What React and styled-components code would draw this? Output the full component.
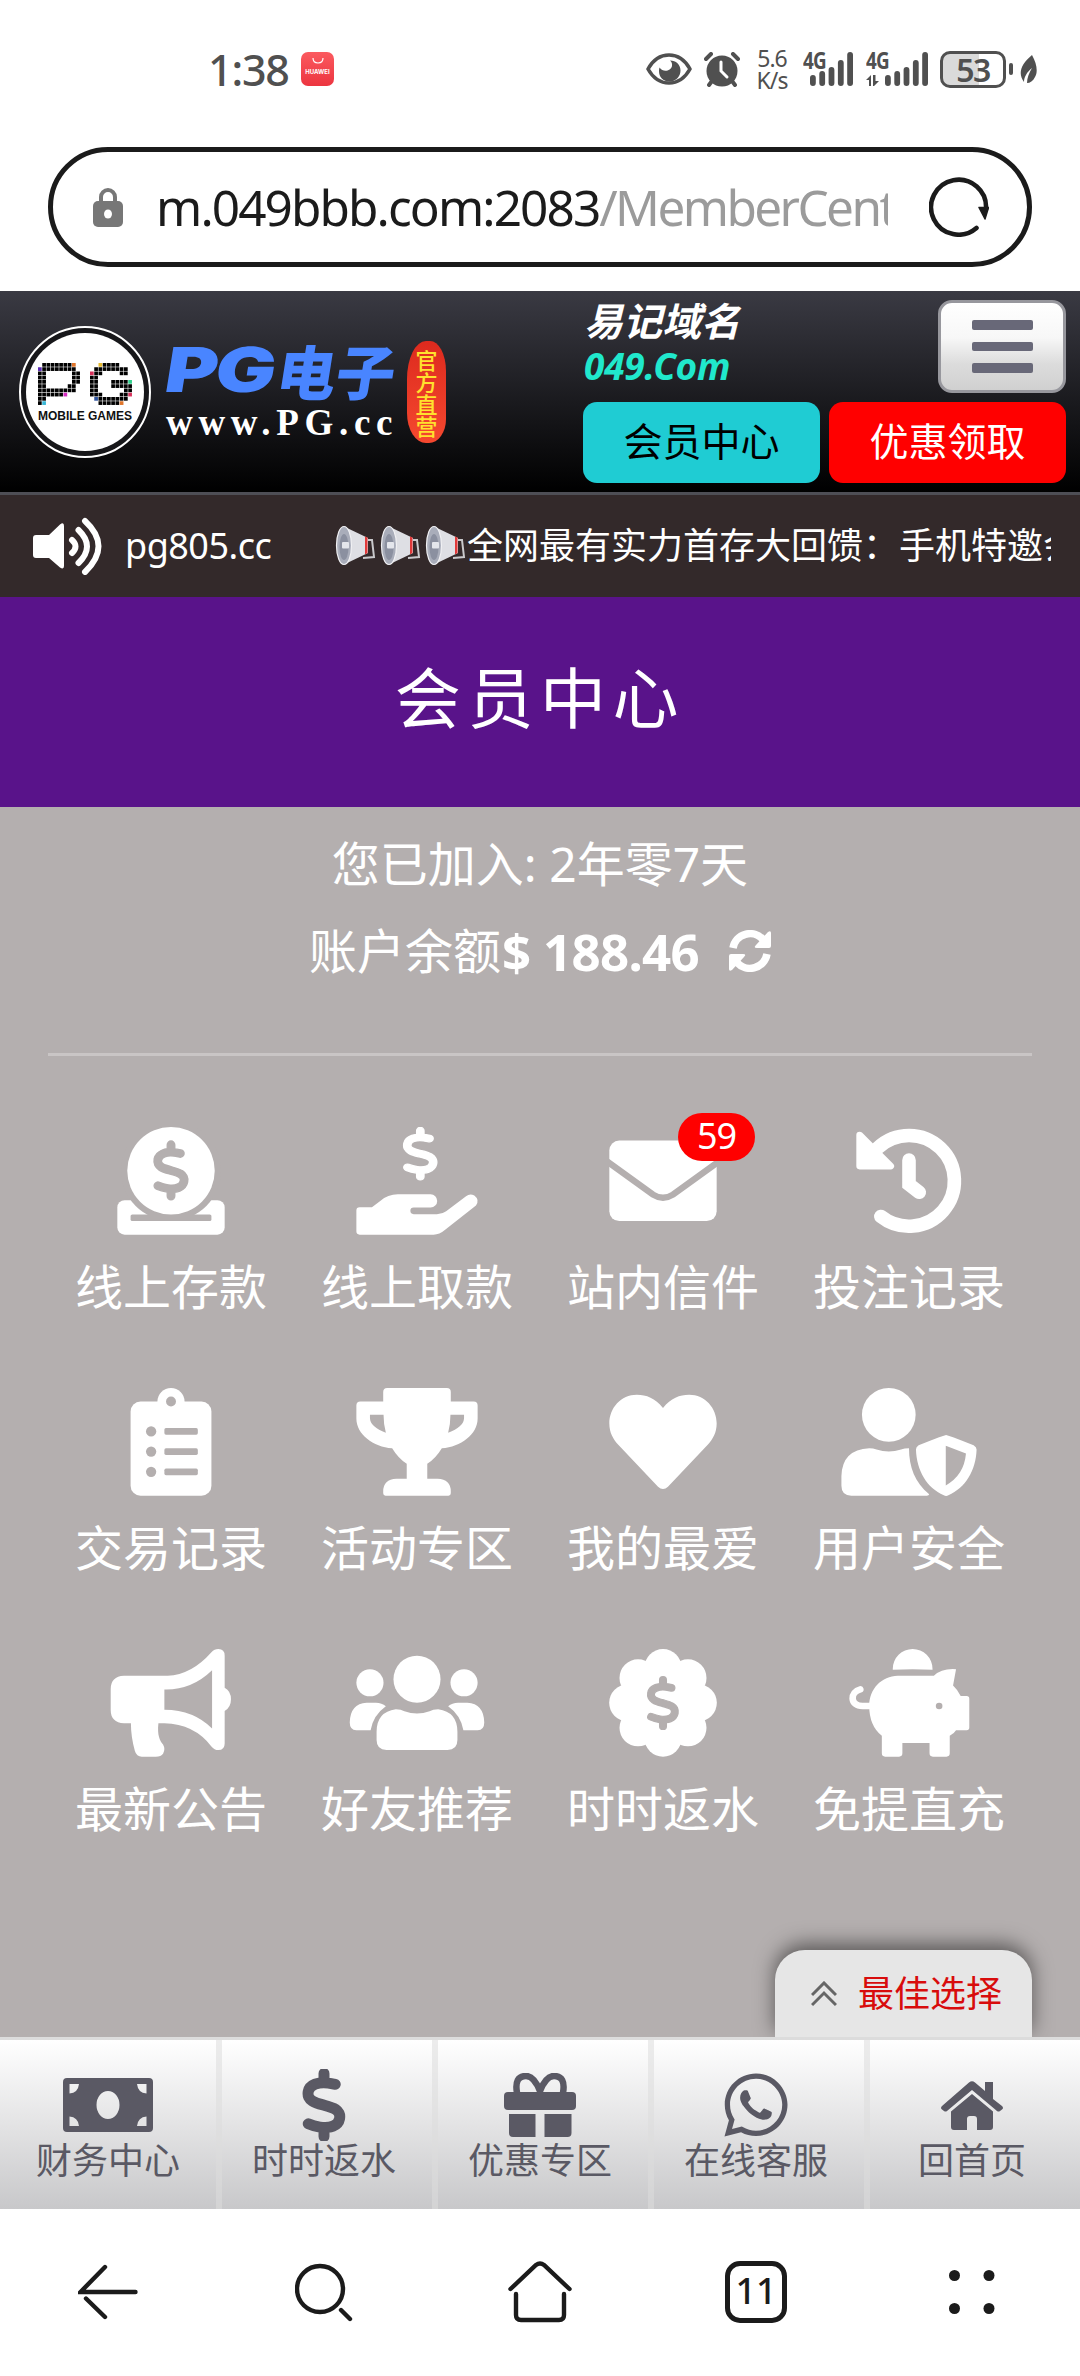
import styled, { createGlobalStyle } from "styled-components";
import { FaDollarSign, FaWhatsapp } from "react-icons/fa6";

const BG = "#b4afaf";
const INK = "#1b1b1b";
const STATUS = "#505050";
const NAV = "#5a5964";

const GlobalStyle = createGlobalStyle`
    * {
        box-sizing: border-box;
    }
    body {
        margin: 0;
        background: #fff;
        font-family: "Noto Sans", "Noto Sans CJK SC", sans-serif;
    }
    svg {
        display: block;
        flex: none;
    }
`;

const Page = styled.div`
    width: 1080px;
    height: 2376px;
    display: flex;
    flex-direction: column;
    overflow: hidden;
    white-space: nowrap;
`;

/* status bar */
const StatusBar = styled.div`
    height: 147px;
    padding: 42px 43px 0 208px;
    display: flex;
    align-items: flex-start;
    justify-content: space-between;
    color: ${STATUS};
`;

const StatusGroup = styled.div`
    height: 54px;
    display: flex;
    align-items: center;
`;

const Clock = styled.span`
    width: 93px;
    font-size: 43px;
    font-weight: 500;
    line-height: 54px;
    letter-spacing: -1.2px;
    padding-top: 2px;
`;

const AppBadge = styled.span`
    width: 33px;
    height: 34px;
    border-radius: 7px;
    background: linear-gradient(#fb5a5f, #ec3540);
    color: #fff;
    display: flex;
    flex-direction: column;
    align-items: center;
    padding-top: 6px;
    font: bold 6px/8px "Inter", sans-serif;
    gap: 4px;
`;

const NetSpeed = styled.span`
    width: 36px;
    margin: 0 13px 0 14px;
    text-align: center;
    font-size: 23px;
    line-height: 22px;
    letter-spacing: -1px;
    padding-bottom: 1px;
`;

const Signal = styled.div`
    width: ${props => props.$width}px;
    height: 36px;
    margin-right: ${props => props.$gap}px;
    position: relative;
`;

const SignalLabel = styled.span`
    position: absolute;
    left: 0;
    top: -2px;
    font: 700 23px/22px "Noto Sans", sans-serif;
    letter-spacing: -1px;
    transform: scaleX(0.82);
    transform-origin: 0 50%;
`;

const Battery = styled.div`
    width: 66px;
    height: 37px;
    border: 3px solid ${STATUS};
    border-radius: 10px;
    background: linear-gradient(90deg, #dadada 60%, #fff 60%);
    font: 600 32px/31px "Noto Sans", sans-serif;
    letter-spacing: -1.5px;
    text-align: center;
`;

const BatteryCap = styled.div`
    width: 4px;
    height: 12px;
    border-radius: 2px;
    margin: 0 7px 0 3px;
    background: ${STATUS};
`;

/* address bar */
const AddressBar = styled.div`
    width: 984px;
    height: 120px;
    margin: 0 48px 24px;
    padding: 0 38px 0 40px;
    border: 5px solid ${INK};
    border-radius: 60px;
    display: flex;
    align-items: center;
    flex: none;
`;

const Url = styled.div`
    width: 732px;
    margin: 0 41px 0 33px;
    overflow: hidden;
    color: ${INK};
    font-size: 49.5px;
    line-height: 66px;
    letter-spacing: -1.9px;
    padding-bottom: 1px;
`;

const UrlPath = styled.span`
    color: #9b9b9b;
    letter-spacing: -2.6px;
`;

/* site header */
const Header = styled.header`
    height: 204px;
    padding: 9px 15px 9px 19px;
    border-bottom: 3px solid #4e4e55;
    background: linear-gradient(#3a3a43, #000);
    display: flex;
    justify-content: space-between;
    flex: none;
`;

const Brand = styled.div`
    display: flex;
    padding-top: 26px;
`;

const LogoRing = styled.div`
    width: 132px;
    height: 132px;
    border: 2px solid #fff;
    border-radius: 50%;
    padding: 5px;
    background: #17171a;
`;

const LogoDisc = styled.div`
    width: 118px;
    height: 118px;
    border-radius: 50%;
    background: #fff;
    padding-top: 30px;
    display: flex;
    flex-direction: column;
    align-items: center;
`;

const LogoCaption = styled.span`
    margin-top: 4px;
    color: #111;
    font: bold 12px/12px "Liberation Sans", sans-serif;
`;

const BrandText = styled.div`
    width: 238px;
    margin-left: 15px;
    padding-top: 13px;
`;

const BrandName = styled.div`
    display: flex;
    align-items: center;
    height: 62px;
    color: #4985ff;
    transform: skewX(-9deg);
`;

const BrandLatin = styled.span`
    width: 112px;
    font: 900 62px/62px "Inter", sans-serif;
    transform: scaleX(1.29);
    transform-origin: 0 50%;
    letter-spacing: -2px;
`;

const BrandHan = styled.span`
    font: 900 59px/62px "Noto Sans CJK SC", sans-serif;
`;

const BrandSite = styled.div`
    color: #fff;
    font: bold 37px/44px "Liberation Serif", serif;
    letter-spacing: 5.7px;
`;

const Seal = styled.div`
    width: 39px;
    height: 102px;
    margin: 15px 0 0 3px;
    padding: 7px 8px;
    border-radius: 19px 16px 17px 19px / 38px 30px 24px 30px;
    background: linear-gradient(#dd2a1e, #f5482f);
    color: #ffe12e;
    font: 500 22px/22px "Noto Sans CJK SC", sans-serif;
    white-space: normal;
    text-align: center;
`;

const HeaderSide = styled.div`
    width: 483px;
    margin-right: -1px;
`;

const HeaderTop = styled.div`
    height: 93px;
    display: flex;
    justify-content: space-between;
    margin-bottom: 9px;
`;

const EasyDomain = styled.div`
    padding-left: 1px;
    font-style: italic;
    font-weight: 700;
    color: #fff;
    font-size: 39px;
    line-height: 42px;
`;

const DomainName = styled.div`
    color: #20e8cc;
    font-size: 37px;
    line-height: 48px;
    letter-spacing: -0.2px;
`;

const MenuButton = styled.button`
    width: 128px;
    height: 93px;
    padding: 0;
    border: 3px solid #97979d;
    border-radius: 14px;
    background: linear-gradient(#fff 0%, #f7f7f7 40%, #dcdcdc 70%, #d0d0d0 100%);
    display: flex;
    flex-direction: column;
    align-items: center;
    justify-content: center;
    gap: 12px;
`;

const MenuLine = styled.span`
    width: 61px;
    height: 9.5px;
    border-radius: 2px;
    background: #686878;
`;

const HeaderButtons = styled.div`
    display: flex;
    justify-content: space-between;
`;

const HeaderButton = styled.button`
    width: 237px;
    height: 81px;
    border: 0;
    padding: 0 0 4px;
    border-radius: 14px;
    background: ${props => props.$bg};
    color: ${props => props.$color};
    font: 400 39px/50px "Noto Sans", "Noto Sans CJK SC", sans-serif;
`;

/* news ticker */
const Ticker = styled.div`
    height: 102px;
    padding: 0 29px 0 33px;
    background: #33292a;
    color: #fff;
    font-size: 36px;
    line-height: 54px;
    display: flex;
    align-items: center;
    flex: none;
`;

const TickerText = styled.div`
    flex: 1;
    margin-left: 23px;
    overflow: hidden;
    display: flex;
    align-items: center;
    padding-bottom: 1px;
`;

const TickerSite = styled.span`
    width: 210px;
    flex: none;
    letter-spacing: -0.5px;
`;

const TickerMessage = styled.span`
    flex: none;
    margin-left: -3px;
`;

const TitleBar = styled.h1`
    height: 210px;
    margin: 0;
    background: #59138a;
    color: #fff;
    font-size: 66px;
    font-weight: 400;
    line-height: 201px;
    letter-spacing: 6.6px;
    text-align: center;
    flex: none;
`;

/* member area */
const Content = styled.main`
    height: 1230px;
    padding: 21px 48px 0;
    background: ${BG};
    color: #fff;
    display: flex;
    flex-direction: column;
    flex: none;
`;

const InfoLine = styled.div`
    height: 72px;
    margin-bottom: 15px;
    display: flex;
    align-items: center;
    justify-content: center;
    font-size: 48px;
    line-height: 72px;
`;

const Amount = styled.strong`
    font-size: 51px;
    letter-spacing: -0.7px;
    margin: 0 30px 0 1px;
`;

const Divider = styled.hr`
    width: 100%;
    height: 3px;
    border: 0;
    margin: 51px 0 71px;
    background: #c9c5c5;
    flex: none;
`;

const MenuGrid = styled.div`
    display: grid;
    grid-template-columns: repeat(4, 246px);
    row-gap: 71px;
`;

const MenuItem = styled.div`
    height: 190px;
    display: flex;
    flex-direction: column;
    align-items: center;
    gap: 22px;
    font-size: 48px;
    line-height: 60px;
    position: relative;
`;

const CountBadge = styled.span`
    position: absolute;
    left: 138px;
    top: -14px;
    width: 77px;
    height: 48px;
    border-radius: 24px;
    background: #f00;
    text-align: center;
    font-size: 36px;
    line-height: 46px;
    letter-spacing: -1px;
`;

const BestChoice = styled.div`
    width: 257px;
    height: 87px;
    margin-top: auto;
    align-self: flex-end;
    padding: 0 30px 0 36px;
    border-radius: 30px 30px 0 0;
    background: #e6e6e6;
    box-shadow: 0 -6px 20px rgba(0, 0, 0, 0.5);
    color: #d80c0c;
    font-size: 36px;
    line-height: 54px;
    display: flex;
    align-items: center;
    justify-content: space-between;
    clip-path: inset(-40px -40px 0 -40px);
`;

/* site bottom navigation */
const BottomNav = styled.nav`
    height: 172px;
    border-top: 3px solid #dcdcdc;
    background: linear-gradient(#fff, #c8c8ca);
    display: flex;
    flex: none;
`;

const BottomItem = styled.div`
    width: 216px;
    display: flex;
    flex-direction: column;
    align-items: center;
    color: ${NAV};
    font-size: 36px;
    line-height: 48px;
    &:not(:first-child) {
        box-shadow: inset 6px 0 0 rgba(221, 221, 221, 0.55);
    }
`;

const BottomIcon = styled.div`
    height: 72px;
    margin-top: 29px;
    margin-bottom: -4px;
    display: flex;
    align-items: center;
    justify-content: center;
`;

/* browser toolbar */
const Toolbar = styled.div`
    height: 167px;
    padding-bottom: 1px;
    display: grid;
    grid-template-columns: repeat(5, 216px);
    align-items: center;
    justify-items: center;
`;

const TabCount = styled.div`
    width: 62px;
    height: 62px;
    border: 5px solid ${INK};
    border-radius: 15px;
    color: ${INK};
    font-size: 36px;
    font-weight: 500;
    line-height: 50px;
    text-align: center;
`;

/* '#' is a black pixel, letters are the coloured ones */
const LOGO_P = [
    ".#######o.",
    "v########.",
    "##......##",
    "##......##",
    "##......##",
    "##.....##.",
    "#########.",
    "######m...",
    "##........",
    "#c........",
];

const LOGO_G = [
    "..y####...",
    ".########.",
    "r##....##.",
    "##........",
    "##...####g",
    "##...#####",
    "##......##",
    "###....##r",
    ".b#######.",
    "..#####o..",
];

const PIXEL_COLORS = {
    "#": "#000",
    o: "#e0752a",
    v: "#5b2bb5",
    m: "#d32cc0",
    c: "#38b6d6",
    y: "#e5b92e",
    r: "#d8315b",
    g: "#2fd08c",
    b: "#2f55a0",
};

function PixelLetter({ rows, x }) {
    return rows.map((row, r) =>
        row.split("").map((cell, c) =>
            cell === "." ? null : (
                <rect
                    key={`${r}-${c}`}
                    x={x + c * 4.25}
                    y={r * 4.25}
                    width="3.7"
                    height="3.7"
                    fill={PIXEL_COLORS[cell]}
                />
            )
        )
    );
}

function LogoPixels() {
    return (
        <svg width="95" height="43" viewBox="0 0 95 43">
            <PixelLetter rows={LOGO_P} x={0} />
            <PixelLetter rows={LOGO_G} x={52} />
        </svg>
    );
}

function EyeIcon() {
    return (
        <svg width="46" height="32" viewBox="0 0 46 32">
            <path d="M2 16C7 7 14 2 23 2s16 5 21 14c-5 9-12 14-21 14S7 25 2 16Z" fill="none" stroke={STATUS} strokeWidth="3.6" strokeLinejoin="round" />
            <path d="M24 7.5c6 0 10.5 4 10.5 10S30 28.5 23.5 28.5 13 24 13 18c0-1.5.2-2.5.6-3.5C17 20 25 18 26 13c.4-2.5-.5-4.5-2-5.5Z" fill={STATUS} />
        </svg>
    );
}

function AlarmIcon() {
    return (
        <svg width="36" height="35" viewBox="0 0 36 35">
            <g stroke={STATUS} strokeWidth="4" strokeLinecap="round">
                <path d="M2 7l5-5M34 7l-5-5M8 29l-3 4M28 29l3 4" />
            </g>
            <circle cx="18" cy="19" r="15.5" fill={STATUS} />
            <path d="M17 10v9l6 6" fill="none" stroke="#fff" strokeWidth="3" strokeLinecap="round" />
        </svg>
    );
}

function SignalBars({ x, arrows }) {
    const tops = [23, 19, 15, 8, 0];
    return (
        <svg width="62" height="36" viewBox="0 0 62 36">
            {tops.map((top, i) => (
                <rect key={top} x={x + i * 9.3} y={top + 1} width="5.8" height={34 - top} rx="2.9" fill={STATUS} />
            ))}
            {arrows && (
                <path d="M0 29l5-5v11H3v-6ZM7 24h2.5v6H13l-5 5H7Z" fill={STATUS} />
            )}
        </svg>
    );
}

function LeafIcon() {
    return (
        <svg width="17" height="29" viewBox="0 0 17 29">
            <path d="M12 0c5 9 6 17 3 22-2 4-5 6-8 6 0-5 2-10 5-15C7 17 4 22 4 27-2 19 0 10 12 0Z" fill={STATUS} />
        </svg>
    );
}

function LockIcon() {
    return (
        <svg width="30" height="40" viewBox="0 0 30 40">
            <path d="M8 17V10a7 7 0 0 1 14 0v7" fill="none" stroke="#777" strokeWidth="4" />
            <rect y="14" width="30" height="26" rx="5" fill="#777" />
            <ellipse cx="15" cy="27" rx="4" ry="4.6" fill="#fff" />
        </svg>
    );
}

function ReloadIcon() {
    return (
        <svg width="60" height="60" viewBox="0 0 60 60">
            <path d="M47.5 51A27.5 27.5 0 1 1 57 32" fill="none" stroke={INK} strokeWidth="4.6" strokeLinecap="round" />
            <path d="M50 30.5h9.5L56 42Z" fill={INK} stroke={INK} strokeWidth="1.5" strokeLinejoin="round" />
        </svg>
    );
}

function SpeakerIcon() {
    return (
        <svg width="69" height="58" viewBox="0 0 69 58">
            <path d="M3 18h13L27 7.5q4-3 4 1.5v40q0 4-4 1.5L16 41H3q-3 0-3-3V21q0-3 3-3Z" fill="#fff" />
            <g fill="none" stroke="#fff" strokeWidth="6" strokeLinecap="round">
                <path d="M39 23q7 6.5 0 13" />
                <path d="M45.5 13q17 16.5 0 33" />
                <path d="M52 4q27 25 0 51" />
            </g>
        </svg>
    );
}

function Horn() {
    return (
        <svg width="45" height="42" viewBox="0 0 45 42">
            <path d="M31 15h6l2 17-11 1" fill="none" stroke="#c9c9cc" strokeWidth="2" />
            <path d="M10 2l23 11v15L10 39Z" fill="#dedfe4" />
            <path d="M30 11.5l2.5 1v15.500l-2.500 1.500Z" fill="#e03a3a" />
            <ellipse cx="9" cy="20.5" rx="7.5" ry="19" fill="#a9adba" stroke="#f0f0f3" strokeWidth="1.2" />
            <ellipse cx="9" cy="22" rx="4.5" ry="13" fill="#8b90a0" />
            <rect x="7" y="17" width="7" height="6.5" rx="1" fill="#e4e6ec" />
        </svg>
    );
}

function RefreshIcon() {
    return (
        <svg width="42" height="42" viewBox="0 0 42 42">
            <g fill="none" stroke="#fff" strokeWidth="7.5">
                <path d="M4 18A17.3 17.3 0 0 1 34 9.5" />
                <path d="M38 24A17.3 17.3 0 0 1 8 32.5" />
            </g>
            <path d="M39 2q3-2 3 1v13q0 2-2 2H28q-4 0-1-3ZM3 40q-3 2-3-1V26q0-2 2-2h12q4 0 1 3Z" fill="#fff" />
        </svg>
    );
}

/* Every tile icon shares one canvas: x is centred on 0, 325 units high */
function TileIcon({ children }) {
    return (
        <svg width="136" height="108" viewBox="-205 0 410 326" fill="#fff">
            {children}
        </svg>
    );
}

/* cx is the middle of the sign, y its top */
function Dollar({ cx = 0, y, width, height, color = "#fff" }) {
    const sx = width / 300;
    const sy = height / 520;
    return (
        <g transform={`translate(${cx - 256 * sx} ${y + 4 * sy}) scale(${sx} ${sy})`}>
            <FaDollarSign size={512} color={color} strokeWidth={12} overflow="visible" />
        </g>
    );
}

const tileIcons = {
    deposit: (
        <>
            <rect x="-162" y="221" width="324" height="104" rx="22" />
            <circle cy="132" r="151" fill={BG} />
            <rect x="-122" y="264" width="244" height="20" rx="5" fill={BG} />
            <circle cy="132" r="132" />
            <Dollar y={41} width={106} height={180} color={BG} />
        </>
    ),
    withdraw: (
        <>
            <Dollar cx={10} y={0} width={104} height={161} />
            <path d="M-173 242H-136L-111 223Q-88 203-58 203H41a20 20 0 0 1 0 40H-10a10 10 0 0 0 0 20H60Q76 263 88 254L148 209Q160 199 173 207Q190 220 178 237L84 311Q68 325 50 325H-173Q-183 325-183 315V252Q-183 242-173 242Z" />
        </>
    ),
    mail: (
        <>
            <rect x="-162" y="41" width="324" height="243" rx="30" />
            <path d="M-170 103L-30 204Q0 223 30 204L170 103" fill="none" stroke={BG} strokeWidth="19" />
        </>
    ),
    history: (
        <>
            <path d="M-94 63A137 137 0 1 1-85 270" fill="none" stroke="#fff" strokeWidth="41" strokeLinecap="round" />
            <path d="M-149 24L-55 118H-149Z" stroke="#fff" strokeWidth="20" strokeLinejoin="round" />
            <path d="M0 100V173L31 197" fill="none" stroke="#fff" strokeWidth="41" strokeLinecap="round" />
        </>
    ),
    clipboard: (
        <>
            <rect x="-122" y="41" width="244" height="284" rx="30" />
            <circle cy="41" r="41" />
            <g fill={BG}>
                <circle cy="41" r="15" />
                {[131, 192, 253].map(y => (
                    <g key={y}>
                        <circle cx="-60" cy={y} r="15.5" />
                        <rect x="-20" y={y - 10} width="101" height="20" rx="5" />
                    </g>
                ))}
            </g>
        </>
    ),
    trophy: (
        <>
            <path d="M-90 0H90Q102 0 102 12V41H171Q183 41 183 53V92C183 140 132 178 75 182Q57 212 31 229V274H62Q102 276 102 312V318Q102 325 95 325H-95Q-102 325-102 318V312Q-102 276-62 274H-31V229Q-57 212-75 182C-132 178-183 140-183 92V53Q-183 41-171 41H-102V12Q-102 0-90 0Z" />
            <path d="M-142 81H-101Q-101 110-94 135Q-140 118-142 92ZM142 81H101Q101 110 94 135Q140 118 142 92Z" fill={BG} />
        </>
    ),
    heart: (
        <path d="M0 60C-24 30-50 20-79 20C-127 20-162 60-162 107C-162 135-150 155-135 171L-15 298Q0 312 15 298L135 171C150 155 162 135 162 107C162 60 127 20 79 20C50 20 24 30 0 60Z" />
    ),
    userShield: (
        <>
            <circle cx="-61" cy="81" r="81" />
            <path d="M-120 182Q-108 182-98 186Q-61 198-24 186Q-14 182 0 182C0 240 18 285 61 321Q60 325 54 325H-174Q-204 325-204 295V266Q-202 186-120 182Z" />
            <path d="M112 142Q117 142 195 173Q204 178 204 186C202 250 170 302 119 324Q112 328 105 324C54 302 23 250 21 186Q21 178 29 173Q107 142 112 142ZM111 174V294Q166 264 172 198Z" fillRule="evenodd" />
        </>
    ),
    bullhorn: (
        <path d="M-142 81H-10Q62 78 122 10Q131 0 143 0Q162 0 162 20V117Q181 127 181 152T162 187V285Q162 305 143 305Q131 305 122 294Q70 226-20 224H-38C-42 260-34 276-24 288Q-16 302-24 316Q-30 325-46 325H-88Q-104 325-109 308Q-121 265-121 224H-142Q-182 222-182 184V121Q-182 83-142 81ZM-20 122V183Q70 184 124 240V64Q62 124-20 122Z" fillRule="evenodd" />
    ),
    users: (
        <>
            <circle cy="91" r="71" />
            <circle cx="-142" cy="102" r="41" />
            <circle cx="142" cy="102" r="41" />
            <path d="M-64 182Q-48 182-38 188Q0 202 38 188Q48 182 64 182Q122 190 122 250V275Q122 305 92 305H-92Q-122 305-122 275V250Q-122 190-64 182Z" />
            <path d="M-152 162H-124Q-106 162-94 173Q-132 200-140 245H-183Q-203 245-203 222Q-202 165-152 162Z" />
            <path d="M152 162H124Q106 162 94 173Q132 200 140 245H183Q203 245 203 222Q202 165 152 162Z" />
        </>
    ),
    rebate: (
        <>
            <circle cy="162" r="115" />
            {[0, 45, 90, 135, 180, 225, 270, 315].map(angle => (
                <circle key={angle} cx="0" cy="56" r="56" transform={`rotate(${angle} 0 162.5)`} />
            ))}
            <Dollar y={82} width={96} height={162} color={BG} />
        </>
    ),
    piggy: (
        <>
            <path d="M-49 63V60A60 60 0 0 1 71 60V63Q40 61 11 61T-49 63Z" />
            <path d="M-34 81H75Q98 58 142 61L133 110Q148 124 156 142H174Q182 142 182 150V237Q182 245 174 245H142Q136 255 123 262V315Q123 325 113 325H72Q62 325 62 315V284H-20V315Q-20 325-30 325H-72Q-82 325-82 315V262Q-120 232-120 172C-120 120-82 82-34 81Z" />
            <path d="M-147 122C-178 130-180 172-140 172H-112" fill="none" stroke="#fff" strokeWidth="20" strokeLinecap="round" />
            <circle cx="91" cy="172" r="10" fill={BG} />
        </>
    ),
};

const menu = [
    { icon: "deposit", label: "线上存款" },
    { icon: "withdraw", label: "线上取款" },
    { icon: "mail", label: "站内信件", count: 59 },
    { icon: "history", label: "投注记录" },
    { icon: "clipboard", label: "交易记录" },
    { icon: "trophy", label: "活动专区" },
    { icon: "heart", label: "我的最爱" },
    { icon: "userShield", label: "用户安全" },
    { icon: "bullhorn", label: "最新公告" },
    { icon: "users", label: "好友推荐" },
    { icon: "rebate", label: "时时返水" },
    { icon: "piggy", label: "免提直充" },
];

function ChevronsIcon() {
    return (
        <svg width="26" height="26" viewBox="0 0 26 26" fill="none" stroke="#666" strokeWidth="3">
            <path d="M1 14L13 2l12 12M1 24L13 12l12 12" />
        </svg>
    );
}

function MoneyIcon() {
    return (
        <svg width="90" height="54" viewBox="0 0 90 54">
            <path d="M4 0H86Q90 0 90 4V50Q90 54 86 54H4Q0 54 0 50V4Q0 0 4 0ZM6.5 6V15.5Q15 15 16 6ZM83.5 6H74Q75 15 83.5 15.5ZM6.5 48H16Q15 39 6.5 38.5ZM83.5 48V38.5Q75 39 74 48ZM45 13A11.5 14 0 1 0 45 41A11.5 14 0 1 0 45 13Z" fill={NAV} fillRule="evenodd" />
        </svg>
    );
}

function GiftIcon() {
    return (
        <svg width="72" height="64" viewBox="0 0 72 64" fill={NAV}>
            <path d="M13 20Q10 3 22 3Q30 3 36 18Q42 3 50 3Q62 3 59 20" fill="none" stroke={NAV} strokeWidth="6.5" />
            <rect y="19" width="72" height="18" rx="4" />
            <path d="M5 41H31.5V64H9Q5 64 5 60ZM40.5 41H67.5V60Q67.5 64 63.5 64H40.5Z" />
        </svg>
    );
}

function HouseIcon() {
    return (
        <svg width="62" height="49" viewBox="0 0 62 49" fill={NAV}>
            <path d="M44 1H52V18L61 25Q63 27 61 28.5L59 30Q57.5 31 56 30L31 9L6 30Q4.5 31 3 30L1 28.5Q-1 27 1 25L28 1.5Q31-1 34 1.5L44 10Z" />
            <path d="M31 13L52 30.5V46Q52 49 49 49H36V38Q36 35 33 35H29Q26 35 26 38V49H13Q10 49 10 46V30.5Z" />
        </svg>
    );
}

function BackIcon() {
    return (
        <svg width="60" height="56" viewBox="0 0 60 56" fill="none" stroke={INK} strokeWidth="4.4" strokeLinecap="round">
            <path d="M27 3L2.5 28H57.5M8 34.5L27 53" />
        </svg>
    );
}

function SearchIcon() {
    return (
        <svg width="58" height="59" viewBox="0 0 58 59" fill="none" stroke={INK} strokeWidth="4.4" strokeLinecap="round">
            <circle cx="25" cy="26" r="23" />
            <path d="M46 47L55 56" />
        </svg>
    );
}

function HomeIcon() {
    return (
        <svg width="64" height="62" viewBox="0 0 64 62" fill="none" stroke={INK} strokeWidth="4.4" strokeLinecap="round">
            <path d="M2.5 28L28 4Q32 1 36 4L61.5 28" />
            <path d="M8 33V54Q8 59 13 59H51Q56 59 56 54V33" />
        </svg>
    );
}

function DotsIcon() {
    return (
        <svg width="46" height="46" viewBox="0 0 46 46" fill={INK}>
            <circle cx="5.5" cy="6.5" r="5.5" />
            <circle cx="40" cy="6.5" r="5.5" />
            <circle cx="5.5" cy="39.5" r="5.5" />
            <circle cx="40" cy="39.5" r="5.5" />
        </svg>
    );
}

const bottomItems = [
    { label: "财务中心", icon: <MoneyIcon /> },
    { label: "时时返水", icon: <FaDollarSign size={72} color={NAV} strokeWidth={14} /> },
    { label: "优惠专区", icon: <GiftIcon /> },
    { label: "在线客服", icon: <FaWhatsapp size={72} color={NAV} /> },
    { label: "回首页", icon: <HouseIcon /> },
];

function StatusRow() {
    return (
        <StatusBar>
            <StatusGroup>
                <Clock>1:38</Clock>
                <AppBadge>
                    <svg width="12" height="6" viewBox="0 0 12 6">
                        <path d="M1 0q0 5 5 5t5-5" fill="none" stroke="#fff" strokeWidth="1.2" />
                    </svg>
                    HUAWEI
                </AppBadge>
            </StatusGroup>
            <StatusGroup>
                <EyeIcon />
                <svg width="12" height="1" />
                <AlarmIcon />
                <NetSpeed>5.6<br />K/s</NetSpeed>
                <Signal $width={51} $gap={12}>
                    <SignalLabel>4G</SignalLabel>
                    <SignalBars x={7} />
                </Signal>
                <Signal $width={62} $gap={12}>
                    <SignalLabel>4G</SignalLabel>
                    <SignalBars x={19} arrows />
                </Signal>
                <Battery>53</Battery>
                <BatteryCap />
                <LeafIcon />
            </StatusGroup>
        </StatusBar>
    );
}

function SiteHeader() {
    return (
        <Header>
            <Brand>
                <LogoRing>
                    <LogoDisc>
                        <LogoPixels />
                        <LogoCaption>MOBILE GAMES</LogoCaption>
                    </LogoDisc>
                </LogoRing>
                <BrandText>
                    <BrandName>
                        <BrandLatin>PG</BrandLatin>
                        <BrandHan>电子</BrandHan>
                    </BrandName>
                    <BrandSite>www.PG.cc</BrandSite>
                </BrandText>
                <Seal>官方直营</Seal>
            </Brand>
            <HeaderSide>
                <HeaderTop>
                    <EasyDomain>
                        易记域名
                        <DomainName>049.Com</DomainName>
                    </EasyDomain>
                    <MenuButton>
                        <MenuLine />
                        <MenuLine />
                        <MenuLine />
                    </MenuButton>
                </HeaderTop>
                <HeaderButtons>
                    <HeaderButton $bg="#1fccd3" $color="#000">会员中心</HeaderButton>
                    <HeaderButton $bg="#f00" $color="#fff">优惠领取</HeaderButton>
                </HeaderButtons>
            </HeaderSide>
        </Header>
    );
}

function App() {
    return (
        <Page>
            <GlobalStyle />
            <StatusRow />
            <AddressBar>
                <LockIcon />
                <Url>m.049bbb.com:2083<UrlPath>/MemberCenter</UrlPath></Url>
                <ReloadIcon />
            </AddressBar>
            <SiteHeader />
            <Ticker>
                <SpeakerIcon />
                <TickerText>
                    <TickerSite>pg805.cc</TickerSite>
                    <Horn />
                    <Horn />
                    <Horn />
                    <TickerMessage>全网最有实力首存大回馈：手机特邀会员</TickerMessage>
                </TickerText>
            </Ticker>
            <TitleBar>会员中心</TitleBar>
            <Content>
                <InfoLine>您已加入: 2年零7天</InfoLine>
                <InfoLine>
                    账户余额<Amount>$ 188.46</Amount>
                    <RefreshIcon />
                </InfoLine>
                <Divider />
                <MenuGrid>
                    {menu.map(item => (
                        <MenuItem key={item.icon}>
                            <TileIcon>{tileIcons[item.icon]}</TileIcon>
                            {item.label}
                            {item.count && <CountBadge>{item.count}</CountBadge>}
                        </MenuItem>
                    ))}
                </MenuGrid>
                <BestChoice>
                    <ChevronsIcon />
                    最佳选择
                </BestChoice>
            </Content>
            <BottomNav>
                {bottomItems.map(item => (
                    <BottomItem key={item.label}>
                        <BottomIcon>{item.icon}</BottomIcon>
                        {item.label}
                    </BottomItem>
                ))}
            </BottomNav>
            <Toolbar>
                <BackIcon />
                <SearchIcon />
                <HomeIcon />
                <TabCount>11</TabCount>
                <DotsIcon />
            </Toolbar>
        </Page>
    );
}

export default App;
